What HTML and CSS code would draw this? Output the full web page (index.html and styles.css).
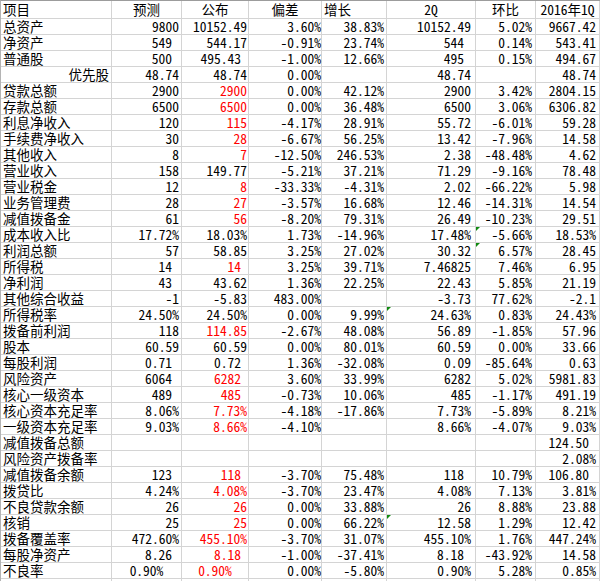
FILE: index.html
```html
<!DOCTYPE html>
<html lang="zh-CN">
<head>
<meta charset="utf-8">
<title>预测与公布对比</title>
<link rel="stylesheet" href="styles.css">
</head>
<body>
<div class="sheet">
  <div class="row head">
    <div class="l">项目</div><div class="m">预测</div><div class="m">公布</div><div class="m">偏差</div><div class="l">增长</div><div class="m">2Q</div><div class="m">环比</div><div class="m">2016年1Q</div>
  </div>
  <div class="row"><div>总资产</div><div>9800</div><div>10152.49</div><div>3.60%</div><div>38.83%</div><div>10152.49</div><div>5.02%</div><div>9667.42</div></div>
  <div class="row"><div>净资产</div><div class="sp">549</div><div>544.17</div><div>-0.91%</div><div>23.74%</div><div class="sp">544</div><div>0.14%</div><div>543.41</div></div>
  <div class="row"><div>普通股</div><div class="sp">500</div><div class="sp">495.43</div><div>-1.00%</div><div>12.66%</div><div class="sp">495</div><div>0.15%</div><div>494.67</div></div>
  <div class="row"><div class="r">优先股</div><div>48.74</div><div>48.74</div><div>0.00%</div><div></div><div>48.74</div><div></div><div>48.74</div></div>
  <div class="row"><div>贷款总额</div><div>2900</div><div class="red">2900</div><div>0.00%</div><div>42.12%</div><div>2900</div><div>3.42%</div><div>2804.15</div></div>
  <div class="row"><div>存款总额</div><div>6500</div><div class="red">6500</div><div>0.00%</div><div>36.48%</div><div>6500</div><div>3.06%</div><div>6306.82</div></div>
  <div class="row"><div>利息净收入</div><div>120</div><div class="red">115</div><div>-4.17%</div><div>28.91%</div><div>55.72</div><div>-6.01%</div><div>59.28</div></div>
  <div class="row"><div>手续费净收入</div><div>30</div><div class="red">28</div><div>-6.67%</div><div>56.25%</div><div>13.42</div><div>-7.96%</div><div>14.58</div></div>
  <div class="row"><div>其他收入</div><div>8</div><div class="red">7</div><div>-12.50%</div><div>246.53%</div><div>2.38</div><div>-48.48%</div><div>4.62</div></div>
  <div class="row"><div>营业收入</div><div>158</div><div>149.77</div><div>-5.21%</div><div>37.21%</div><div>71.29</div><div>-9.16%</div><div>78.48</div></div>
  <div class="row"><div>营业税金</div><div>12</div><div class="red">8</div><div>-33.33%</div><div>-4.31%</div><div>2.02</div><div>-66.22%</div><div>5.98</div></div>
  <div class="row"><div>业务管理费</div><div>28</div><div class="red">27</div><div>-3.57%</div><div>16.68%</div><div>12.46</div><div>-14.31%</div><div>14.54</div></div>
  <div class="row"><div>减值拨备金</div><div>61</div><div class="red">56</div><div>-8.20%</div><div>79.31%</div><div>26.49</div><div>-10.23%</div><div>29.51</div></div>
  <div class="row"><div>成本收入比</div><div>17.72%</div><div>18.03%</div><div>1.73%</div><div>-14.96%</div><div>17.48%</div><div class="tri">-5.66%</div><div>18.53%</div></div>
  <div class="row"><div>利润总额</div><div>57</div><div>58.85</div><div>3.25%</div><div>27.02%</div><div>30.32</div><div class="tri">6.57%</div><div>28.45</div></div>
  <div class="row"><div>所得税</div><div class="sp">14</div><div class="red sp">14</div><div>3.25%</div><div>39.71%</div><div>7.46825</div><div>7.46%</div><div>6.95</div></div>
  <div class="row"><div>净利润</div><div class="sp">43</div><div>43.62</div><div>1.36%</div><div>22.25%</div><div>22.43</div><div>5.85%</div><div>21.19</div></div>
  <div class="row"><div>其他综合收益</div><div>-1</div><div>-5.83</div><div>483.00%</div><div></div><div>-3.73</div><div>77.62%</div><div>-2.1</div></div>
  <div class="row"><div>所得税率</div><div>24.50%</div><div>24.50%</div><div>0.00%</div><div>9.99%</div><div class="tri">24.63%</div><div>0.83%</div><div>24.43%</div></div>
  <div class="row"><div>拨备前利润</div><div>118</div><div class="red">114.85</div><div>-2.67%</div><div>48.08%</div><div>56.89</div><div>-1.85%</div><div>57.96</div></div>
  <div class="row"><div>股本</div><div>60.59</div><div>60.59</div><div>0.00%</div><div>80.01%</div><div>60.59</div><div>0.00%</div><div>33.66</div></div>
  <div class="row"><div>每股利润</div><div class="sp">0.71</div><div class="sp">0.72</div><div>1.36%</div><div>-32.08%</div><div>0.09</div><div>-85.64%</div><div>0.63</div></div>
  <div class="row"><div>风险资产</div><div class="sp">6064</div><div class="red sp">6282</div><div>3.60%</div><div>33.99%</div><div>6282</div><div>5.02%</div><div>5981.83</div></div>
  <div class="row"><div>核心一级资本</div><div class="sp">489</div><div class="red sp">485</div><div>-0.73%</div><div>10.06%</div><div>485</div><div>-1.17%</div><div>491.19</div></div>
  <div class="row"><div>核心资本充足率</div><div>8.06%</div><div class="red">7.73%</div><div>-4.18%</div><div>-17.86%</div><div>7.73%</div><div>-5.89%</div><div>8.21%</div></div>
  <div class="row"><div>一级资本充足率</div><div>9.03%</div><div class="red">8.66%</div><div>-4.10%</div><div></div><div>8.66%</div><div>-4.07%</div><div>9.03%</div></div>
  <div class="row"><div>减值拨备总额</div><div></div><div></div><div></div><div></div><div></div><div></div><div class="sp">124.50</div></div>
  <div class="row"><div>风险资产拨备率</div><div></div><div></div><div></div><div></div><div></div><div></div><div>2.08%</div></div>
  <div class="row"><div>减值拨备余额</div><div class="sp">123</div><div class="red sp">118</div><div>-3.70%</div><div>75.48%</div><div class="sp">118</div><div>10.79%</div><div class="sp">106.80</div></div>
  <div class="row"><div>拨贷比</div><div>4.24%</div><div class="red">4.08%</div><div>-3.70%</div><div>23.47%</div><div>4.08%</div><div>7.13%</div><div>3.81%</div></div>
  <div class="row"><div>不良贷款余额</div><div>26</div><div class="red">26</div><div>0.00%</div><div>33.88%</div><div>26</div><div>8.88%</div><div>23.88</div></div>
  <div class="row"><div>核销</div><div>25</div><div class="red">25</div><div>0.00%</div><div>66.22%</div><div class="tri">12.58</div><div>1.29%</div><div>12.42</div></div>
  <div class="row"><div>拨备覆盖率</div><div>472.60%</div><div class="red">455.10%</div><div>-3.70%</div><div>31.07%</div><div>455.10%</div><div>1.76%</div><div>447.24%</div></div>
  <div class="row"><div>每股净资产</div><div class="sp">8.26</div><div class="red sp">8.18</div><div>-1.00%</div><div>-37.41%</div><div class="sp">8.18</div><div>-43.92%</div><div>14.58</div></div>
  <div class="row"><div>不良率</div><div class="m">0.90%</div><div class="red m">0.90%</div><div>0.00%</div><div>-5.80%</div><div>0.90%</div><div>5.28%</div><div>0.85%</div></div>
  <div class="row"><div></div><div></div><div></div><div></div><div></div><div></div><div></div><div></div></div>
</div>
</body>
</html>
```
FILE: styles.css
```css
html, body {
  margin: 0;
  background: #ffffff;
}

.sheet {
  display: flex;
  flex-direction: column;
  width: 599px;
  border-top: 1px solid #9c9c9c;
  border-left: 1px solid #b4b4b4;
  font-family: "Noto Sans CJK SC", sans-serif;
  font-size: 13.5px;
  font-feature-settings: "hwid" 1;
  color: #000000;
}

.row {
  display: grid;
  grid-template-columns: 111px 70px 67px 73px 65px 89px 60px 64px;
  height: 16px;
  line-height: 15px;
}

.row.head {
  height: 18px;
  line-height: 17px;
}

.row > div {
  position: relative;
  border-right: 1px solid #d4d4d4;
  border-bottom: 1px solid #d4d4d4;
  white-space: nowrap;
  text-align: right;
}

/* first column: labels */
.row > div:nth-child(1) { text-align: left; padding-left: 2px; }
.row > div:nth-child(2) { padding-right: 2px; }
.row > div:nth-child(3) { padding-right: 1px; }
.row > div:nth-child(4) { padding-right: 0; }
.row > div:nth-child(5) { padding-right: 2px; }
.row > div:nth-child(6) { padding-right: 4px; }
.row > div:nth-child(7) { padding-right: 3px; }
.row > div:nth-child(8) { padding-right: 3px; }

.row > div.sp:nth-child(2) { padding-right: 9px; }
.row > div.sp:nth-child(3) { padding-right: 7px; }
.row > div.sp:nth-child(6) { padding-right: 11px; }
.row > div.sp:nth-child(8) { padding-right: 10px; }

.row > div.l { text-align: left; padding-left: 2px; padding-right: 0; }
.row > div.m { text-align: center; padding: 0; }
.row > div.r { text-align: right; padding-right: 2px; padding-left: 0; }

.red { color: #ff0000; }

.tri::before {
  content: "";
  position: absolute;
  left: 0;
  top: 0;
  border-style: solid;
  border-width: 4px 4px 0 0;
  border-color: #108a10 transparent transparent transparent;
}
```
